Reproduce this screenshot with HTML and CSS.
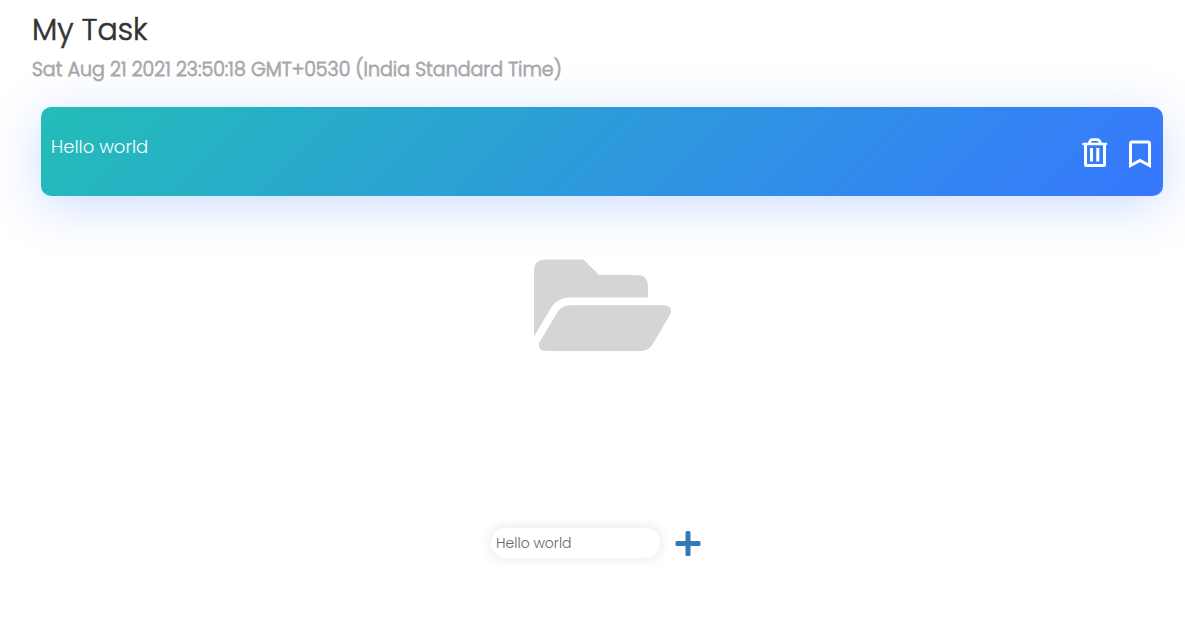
FILE: index.html
```html
<!DOCTYPE html>
<html lang="en">
<head>
<meta charset="utf-8">
<meta name="viewport" content="width=device-width, initial-scale=1">
<title>My Task</title>
<link rel="stylesheet" href="styles.css">
</head>
<body>
<header class="header">
  <h1 class="title">My Task</h1>
  <p class="date">Sat Aug 21 2021 23:50:18 GMT+0530 (India Standard Time)</p>
</header>
<main>
  <ul class="tasks">
    <li class="task">
      <span class="task-text">Hello world</span>
      <div class="actions">
        <button class="icon-button" type="button" aria-label="Delete task">
          <svg width="26" height="30" viewBox="0 0 26 30" fill="none" stroke="#fff" stroke-width="3" stroke-linejoin="round">
            <path d="M1.500 6h22.500" stroke-linecap="round" stroke-width="2.600"/>
            <path d="M7 6c.6-3 2-4.300 3.500-4.300h4.500C16.500 1.700 18 3 18.600 6" stroke-width="2.800"/>
            <path d="M3.500 7v19.500q0 1 1 1h17q1 0 1-1V7"/>
            <path d="M9.500 10v13.500M15.800 10v13.500" stroke-width="3"/>
          </svg>
        </button>
        <button class="icon-button" type="button" aria-label="Bookmark task">
          <svg width="22" height="30" viewBox="0 0 22 30" fill="none" stroke="#fff" stroke-width="3">
            <path d="M1.500 27.500v-22q0-1.500 1.500-1.500h16q1.500 0 1.500 1.500v22L11 22.500z"/>
          </svg>
        </button>
      </div>
    </li>
  </ul>
  <div class="folder">
    <svg width="138" height="92" viewBox="0 0 138 92" fill="#d5d5d5" aria-hidden="true">
      <path d="M0 77.500V12Q0 .5 11.500 .5H49.500L65 16H102.500Q114 16 114 27.500V38.500H36Q24 38.500 17.500 48z"/>
      <path d="M36.500 46.200H131Q138 47 137 54L120 83Q115.500 92 107 92H11Q4 91 5 84L23.500 53Q28 46.200 36.500 46.200z"/>
    </svg>
  </div>
</main>
<form class="add-form">
  <input class="task-input" type="text" aria-label="New task" value="Hello world">
  <button class="icon-button" type="button" aria-label="Add task">
    <svg width="26" height="26" viewBox="0 0 26 26" fill="#337ab7">
      <rect x="10.500" y="1" width="5" height="25" rx="1.500"/>
      <rect x="0.500" y="11" width="25" height="5" rx="1.500"/>
    </svg>
  </button>
</form>
</body>
</html>
```
FILE: styles.css
```css
* {
  box-sizing: border-box;
}

body {
  margin: 0;
  min-height: 100vh;
  display: flex;
  flex-direction: column;
  background: #fff;
  color: #333;
  font-family: Poppins, Inter, "Open Sans", sans-serif;
  font-weight: 300;
}

.header {
  padding: 12px 32px 0;
}

.title {
  margin: 0;
  font-size: 30px;
  font-weight: 300;
  line-height: 36px;
  -webkit-text-stroke: 0.02em currentColor;
}

.date {
  margin: 8px 0 0;
  color: #a9a9a9;
  font-size: 19px;
  line-height: 28px;
  -webkit-text-stroke: 0.04em currentColor;
}

.tasks {
  margin: 23px 22px 0 41px;
  padding: 0;
  list-style: none;
}

.task {
  display: flex;
  justify-content: space-between;
  align-items: flex-start;
  padding: 26px 12px 24px 10px;
  min-height: 89px;
  border-radius: 10px;
  background: linear-gradient(135deg, #23bdb8, #3777ff);
  box-shadow: 0 10px 50px rgba(55, 119, 255, 0.25);
  color: #fff;
}

.task-text {
  font-size: 18px;
  line-height: 28px;
}

.actions {
  display: flex;
  gap: 21px;
  padding-top: 5px;
}

.icon-button {
  display: block;
  padding: 0;
  border: 0;
  background: none;
  cursor: pointer;
}

.icon-button svg {
  display: block;
}

.folder {
  display: flex;
  justify-content: center;
  padding: 63px 0 0 20px;
}

.add-form {
  display: flex;
  justify-content: center;
  align-items: center;
  gap: 15px;
  margin-top: auto;
  padding: 0 0 84px 7px;
}

.task-input {
  width: 169px;
  height: 30px;
  padding: 0 5px;
  border: 0;
  border-radius: 15px;
  outline: 0;
  background: #fff;
  box-shadow: 0 0 10px 4px rgba(0, 0, 0, 0.06);
  color: #666;
  font-family: inherit;
  font-size: 14px;
  font-weight: 300;
}
```
